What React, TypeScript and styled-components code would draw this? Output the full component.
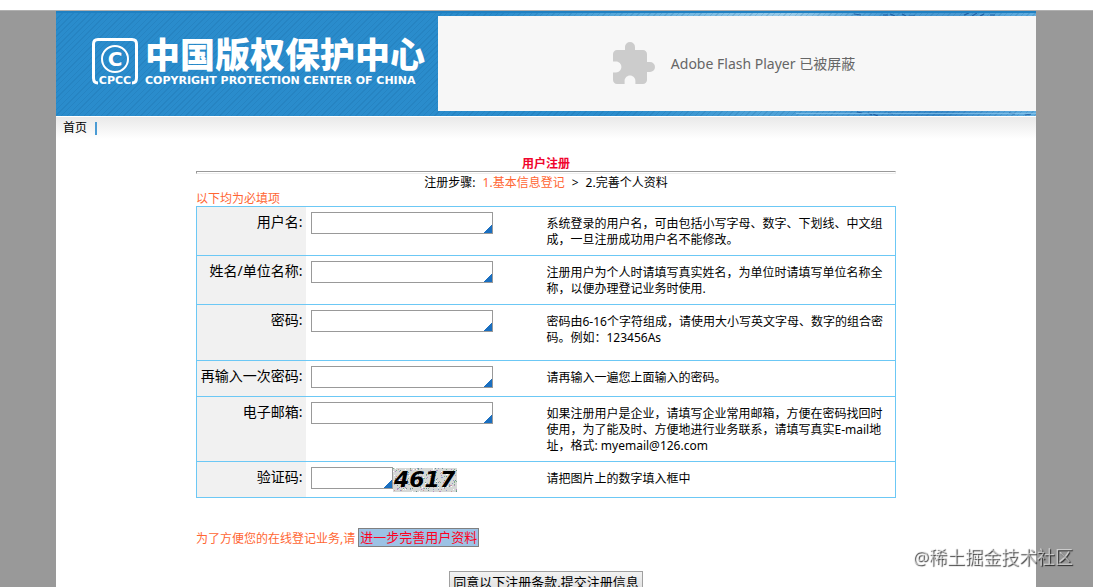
import React from "react";
import styled, { createGlobalStyle } from "styled-components";

const GlobalStyle = createGlobalStyle`
  * { box-sizing: border-box; }
  body {
    margin: 0;
    background: #999;
    color: #000;
    font: 12px/16px "Noto Sans", "Noto Sans CJK SC", sans-serif;
  }
`;

const TopBar = styled.div`
  height: 11px;
  background: #fff;
  border-bottom: 1px solid #b0b0b0;
`;

const Page = styled.div`
  padding: 0 57px 0 56px;
`;

const Sheet = styled.div`
  max-width: 980px;
  margin: 0 auto;
  background: #fff;
`;

const Header = styled.header`
  position: relative;
  display: flex;
  padding: 3px 0 5px;
  border-top: 2px solid #1f80c2;
  background:
    repeating-linear-gradient(135deg, rgba(20, 95, 150, 0.18) 0 1px, transparent 1px 4px),
    linear-gradient(90deg, #2a8ccc 0 45%, #5aaadb 58%, #8cc4e6 70%, #9acbe8 75%, #4a9bd4 84%, #4a98d0 92%, #62aee0) top / 100% 3px no-repeat,
    linear-gradient(90deg, #2a8ccc 0 58%, #4fa3d8 72%, #4a9bd4 80%, #3788c8 90%, #62aee0);
`;

const Specks = styled.svg`
  position: absolute;
  top: 0;
  right: 0;
  width: 300px;
  height: 103px;
`;

const Brand = styled.a`
  flex: 0 0 382px;
  display: flex;
  align-items: flex-start;
  gap: 7px;
  padding: 22px 0 0 36px;
  color: #fff;
  text-decoration: none;
`;

const BrandNames = styled.span`
  display: flex;
  flex-direction: column;
  gap: 7px;
  white-space: nowrap;
`;

const BrandCn = styled.span`
  font: 900 35px/30px "Noto Sans CJK SC", sans-serif;
`;

const BrandEn = styled.span`
  font: bold 11px/12px "DejaVu Sans", sans-serif;
`;

const FlashBlocked = styled.div`
  position: relative;
  flex: 1;
  height: 95px;
  padding-right: 10px;
  display: flex;
  align-items: center;
  justify-content: center;
  gap: 14px;
  background: #f7f7f7;
  color: #666;
  font-size: 14px;
`;

const Nav = styled.nav`
  height: 24px;
  margin-top: 1px;
  padding: 3px 7px;
  display: flex;
  gap: 8px;
  background: linear-gradient(#e9e9e9, #fff 22px);
  a { color: #000; text-decoration: none; }
`;

const NavDivider = styled.span`
  width: 2px;
  height: 13px;
  margin-top: 2px;
  background: #4a9bd4;
`;

const Form = styled.form`
  max-width: 700px;
  margin: 0 auto;
  padding: 15px 0 20px;
`;

const Title = styled.h1`
  margin: 0;
  color: #f0052d;
  font-size: 12px;
  line-height: 15px;
  text-align: center;
`;

const Rule = styled.hr`
  height: 3px;
  margin: 0;
  border: 1px solid #999;
  border-right-color: #eee;
  border-bottom-color: #eee;
`;

const Steps = styled.p`
  margin: 1px 0 0;
  display: flex;
  justify-content: center;
  gap: 7px;
`;

const Accent = styled.span`
  color: #ff6633;
`;

const Note = styled.p`
  margin: 0;
  color: #ff6633;
  line-height: 15px;
`;

const Fields = styled.table`
  width: 100%;
  table-layout: fixed;
  border-collapse: collapse;
  border: 1px solid #6cc8f5;
`;

const Row = styled.tr<{ $height: number }>`
  height: ${(p) => p.$height}px;
  border-top: 1px solid #6cc8f5;
`;

const LabelCell = styled.th`
  width: 109px;
  padding: 5px 3px;
  background: #f1f1f1;
  font-size: 14px;
  font-weight: normal;
  line-height: 20px;
  text-align: right;
  vertical-align: top;
  white-space: nowrap;
`;

const InputCell = styled.td`
  width: 234px;
  padding: 5px;
  vertical-align: top;
`;

const InputLine = styled.div`
  display: flex;
  align-items: flex-start;
`;

const HintCell = styled.td`
  padding: 9px 8px 7px 7px;
  vertical-align: top;
`;

const TextInput = styled.input<{ $width: number }>`
  width: ${(p) => p.$width}px;
  height: 22px;
  padding: 0 4px;
  border: 1px solid #999;
  border-radius: 0;
  outline: none;
  font: inherit;
  background: linear-gradient(135deg, transparent 50%, #1a6fc0 50%) right bottom / 8px 8px no-repeat #fff;
`;

const Captcha = styled.svg`
  width: 64px;
  height: 24px;
  margin-top: 1px;
`;

const MoreLine = styled.p`
  margin: 30px 0 0;
  display: flex;
  align-items: flex-end;
  gap: 3px;
  color: #ff6633;
`;

const MoreButton = styled.button`
  height: 19px;
  padding: 0 1px;
  border: 1px solid #808080;
  background: #9cc2e5;
  color: #ff0022;
  font: 13px/17px "Noto Sans", "Noto Sans CJK SC", sans-serif;
`;

const SubmitLine = styled.div`
  margin-top: 24px;
  text-align: center;
`;

const SubmitButton = styled.button`
  height: 22px;
  padding: 0 3px;
  border: 1px solid #a0a0a0;
  background: linear-gradient(#f2f2f2, #dedede);
  color: #000;
  font: 13px/20px "Noto Sans", "Noto Sans CJK SC", sans-serif;
`;

const Watermark = styled.div`
  position: fixed;
  right: 20px;
  bottom: 17px;
  color: rgba(255, 255, 255, 0.55);
  font-size: 18px;
  line-height: 26px;
  text-shadow: 1px 1px 1px rgba(0, 0, 0, 0.75);
`;

const fields = [
  { id: "user", label: "用户名:", type: "text", height: 49, hint: "系统登录的用户名，可由包括小写字母、数字、下划线、中文组成，一旦注册成功用户名不能修改。" },
  { id: "name", label: "姓名/单位名称:", type: "text", height: 49, hint: "注册用户为个人时请填写真实姓名，为单位时请填写单位名称全称，以便办理登记业务时使用." },
  { id: "pass", label: "密码:", type: "password", height: 56, hint: "密码由6-16个字符组成，请使用大小写英文字母、数字的组合密码。例如：123456As" },
  { id: "again", label: "再输入一次密码:", type: "password", height: 36, hint: "请再输入一遍您上面输入的密码。" },
  { id: "mail", label: "电子邮箱:", type: "email", height: 65, hint: "如果注册用户是企业，请填写企业常用邮箱，方便在密码找回时使用，为了能及时、方便地进行业务联系，请填写真实E-mail地址，格式: myemail@126.com" },
  { id: "code", label: "验证码:", type: "text", height: 36, hint: "请把图片上的数字填入框中" },
];

const noiseColors = ["#7fae8c", "#b98ac0", "#8f9bc8", "#c79c9c", "#6f8f8f", "#ffffff"];
const noise = Array.from({ length: 230 }, (_, i) => ({
  x: (i * 37 + ((i * i) % 11)) % 64,
  y: (i * 13 + ((i * i) % 7)) % 24,
  fill: noiseColors[i % noiseColors.length],
}));

function Emblem() {
  return (
    <svg width="46" height="48" viewBox="0 0 46 48" fill="none" aria-hidden="true">
      <path d="M6 45 Q1.500 45 1.500 40 V6 Q1.500 1.500 6 1.500 H40 Q44.500 1.500 44.500 6 V40 Q44.500 45 40 45" stroke="#fff" strokeWidth="3" />
      <circle cx="23" cy="21" r="13" stroke="#fff" strokeWidth="2" />
      <text x="23" y="28" textAnchor="middle" fill="#fff" fontFamily="DejaVu Sans" fontWeight="bold" fontSize="20">C</text>
      <text x="23" y="46" textAnchor="middle" fill="#fff" fontFamily="DejaVu Sans" fontWeight="bold" fontSize="11">CPCC</text>
    </svg>
  );
}

export default function App() {
  return (
    <>
      <GlobalStyle />
      <TopBar />
      <Page>
        <Sheet>
          <Header>
            <Specks viewBox="0 0 300 103" aria-hidden="true">
              <g fill="none" stroke="#174f96" strokeWidth="1.2" opacity=".75">
                <path d="M118 1l7 1M147 2h5M154 1l5 2M166 1l4 2M173 3h6M228 2l5-2M236 3l5-3M244 3l4-2M254 2h5" />
                <path d="M121 99l5 1M132 100l4 2M137 101l5 2M152 100l5 1M273 100l6 1M289 102l6-1" />
              </g>
              <path d="M60 100.500H300" stroke="#8fc9ec" strokeWidth=".7" />
            </Specks>
            <Brand href="#">
              <Emblem />
              <BrandNames>
                <BrandCn>中国版权保护中心</BrandCn>
                <BrandEn>COPYRIGHT PROTECTION CENTER OF CHINA</BrandEn>
              </BrandNames>
            </Brand>
            <FlashBlocked>
              <svg width="48" height="48" viewBox="0 0 24 24" fill="#ccc" aria-hidden="true">
                <path d="M20.500 11H19V7c0-1.100-.9-2-2-2h-4V3.500a2.500 2.500 0 0 0-5 0V5H4c-1.100 0-1.990.9-1.990 2v3.800H3.500c1.490 0 2.700 1.210 2.700 2.700s-1.210 2.700-2.700 2.700H2V20c0 1.100.9 2 2 2h3.800v-1.500c0-1.490 1.210-2.700 2.700-2.700s2.700 1.210 2.700 2.700V22H17c1.100 0 2-.9 2-2v-4h1.500a2.500 2.500 0 0 0 0-5z" />
              </svg>
              <span>Adobe Flash Player 已被屏蔽</span>
            </FlashBlocked>
          </Header>
          <Nav>
            <a href="#">首页</a>
            <NavDivider />
          </Nav>
          <Form onSubmit={(e: React.FormEvent) => e.preventDefault()}>
            <Title>用户注册</Title>
            <Rule />
            <Steps>
              <span>注册步骤:</span>
              <Accent>1.基本信息登记</Accent>
              <span>&gt;</span>
              <span>2.完善个人资料</span>
            </Steps>
            <Note>以下均为必填项</Note>
            <Fields>
              <tbody>
                {fields.map((f) => (
                  <Row key={f.id} $height={f.height}>
                    <LabelCell scope="row">
                      <label htmlFor={f.id}>{f.label}</label>
                    </LabelCell>
                    <InputCell>
                      <InputLine>
                        <TextInput id={f.id} type={f.type} $width={f.id === "code" ? 82 : 182} />
                        {f.id === "code" && (
                          <Captcha viewBox="0 0 64 24">
                            <rect width="64" height="24" fill="#d6d8d6" />
                            {noise.map((n, i) => (
                              <rect key={i} x={n.x} y={n.y} width="1" height="1" fill={n.fill} />
                            ))}
                            <text x="1" y="19" fontFamily="DejaVu Sans" fontSize="22" fontWeight="bold" fontStyle="italic">4617</text>
                          </Captcha>
                        )}
                      </InputLine>
                    </InputCell>
                    <HintCell>{f.hint}</HintCell>
                  </Row>
                ))}
              </tbody>
            </Fields>
            <MoreLine>
              <span>为了方便您的在线登记业务,请</span>
              <MoreButton type="button">进一步完善用户资料</MoreButton>
            </MoreLine>
            <SubmitLine>
              <SubmitButton type="submit">同意以下注册条款,提交注册信息</SubmitButton>
            </SubmitLine>
          </Form>
        </Sheet>
      </Page>
      <Watermark>@稀土掘金技术社区</Watermark>
    </>
  );
}
